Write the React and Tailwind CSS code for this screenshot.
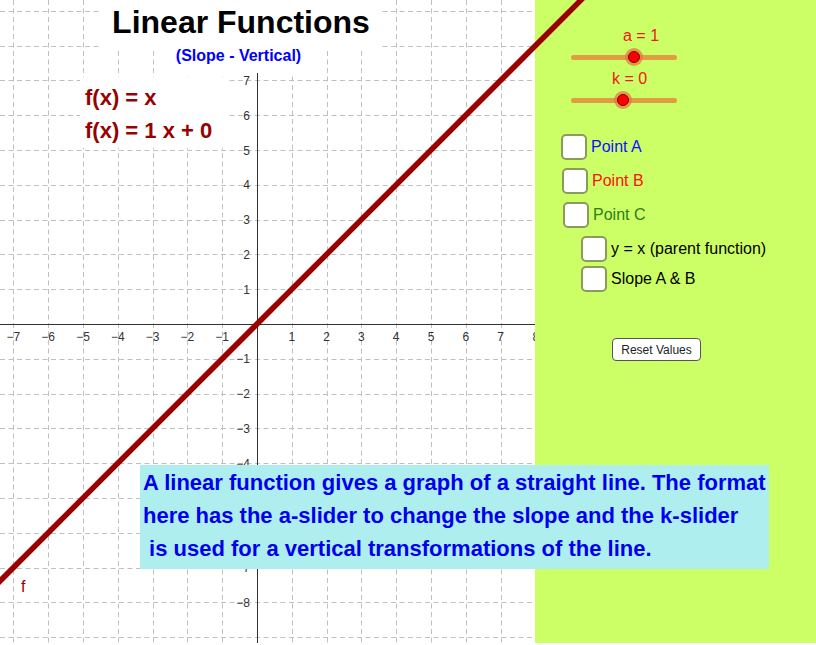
import React from 'react';

const UNIT = 34.8;
const OX = 257;
const OY = 324;
const W = 535;
const H = 643;

const px = (k) => Math.round(OX + UNIT * k) + 0.5;
const py = (k) => Math.round(OY - UNIT * k) + 0.5;
const range = (a, b) => Array.from({ length: b - a + 1 }, (_, i) => a + i);
const fmt = (n) => (n < 0 ? `\u2212${-n}` : `${n}`);

// y ticks hidden behind the text boxes are left out
const Y_TICKS = [-8, -7, -4, -3, -2, -1, 1, 2, 3, 4, 5, 6, 7];

function Graph() {
  return (
    <svg width={W} height={H} className="block">
      {/* grid */}
      {range(-7, 8).map((k) => (
        <line key={`gx${k}`} x1={px(k)} y1={0} x2={px(k)} y2={H} stroke="#c0c0c0" strokeDasharray="5 3.5" />
      ))}
      {range(-9, 9).map((k) => (
        <line key={`gy${k}`} x1={0} y1={py(k)} x2={W} y2={py(k)} stroke="#c0c0c0" strokeDasharray="5 3.5" />
      ))}

      {/* axes */}
      <line x1={0} y1={OY + 0.5} x2={W} y2={OY + 0.5} stroke="#333" />
      <line x1={OX + 0.5} y1={73} x2={OX + 0.5} y2={H} stroke="#333" />

      {/* tick labels */}
      <g fontFamily="'Liberation Sans', Arial, sans-serif" fontSize="12" fill="#333">
        {range(-7, 7).filter((k) => k !== 0).map((k) => (
          <text key={`lx${k}`} x={OX + UNIT * k} y={341} textAnchor="middle">{fmt(k)}</text>
        ))}
        <text x={OX + UNIT * 8 - 3} y={341}>8</text>
        {Y_TICKS.map((k) => (
          <text key={`ly${k}`} x={250} y={OY - UNIT * k + 4.5} textAnchor="end">{fmt(k)}</text>
        ))}
      </g>
    </svg>
  );
}

function Slider({ label, labelOffset, knob }) {
  return (
    <>
      <div className="h-[18px] leading-[18px] text-[16px] text-[#f01818]" style={{ marginLeft: labelOffset }}>
        {label}
      </div>
      <div className="relative ml-[36px] mt-[3px] h-[18px] w-[106px]">
        <div className="absolute left-0 right-0 top-[6.5px] h-[5px] rounded-full bg-[#e29d44]" />
        <div
          className="absolute top-0 h-[18px] w-[18px] rounded-full bg-[#e8703f]/70 flex items-center justify-center"
          style={{ left: knob - 9 }}
        >
          <div className="h-[12px] w-[12px] rounded-full bg-[#ff0000] border border-[#7a0000]" />
        </div>
      </div>
    </>
  );
}

function Check({ label, color, className }) {
  return (
    <div className={`flex items-center gap-[4px] ${className}`}>
      <div className="h-[26px] w-[26px] rounded-[5px] border-2 border-[#8c9b5c] bg-white" />
      <span className="text-[16px] leading-[18px]" style={{ color }}>{label}</span>
    </div>
  );
}

export default function App() {
  return (
    <div className="relative flex w-[816px] h-[643px] overflow-hidden font-['Liberation_Sans',Arial,sans-serif]">
      {/* graphics view */}
      <div className="relative w-[535px] h-[643px] bg-white shrink-0">
        <Graph />

        <div className="absolute left-[100px] top-0 w-[282px] h-[48px] bg-white pt-[6px] text-center text-[32px] leading-[32px] font-bold text-black">
          Linear Functions
        </div>
        <div className="absolute left-[170px] top-[44px] w-[137px] h-[29px] bg-white pt-[4px] text-center text-[16px] leading-[16px] font-bold text-[#0000ff]">
          (Slope - Vertical)
        </div>
        <div className="absolute left-[80px] top-[77px] w-[146px] h-[71px] bg-white pt-[4px] pl-[5px] text-[22px] leading-[33px] font-bold text-[#990000]">
          <div>f(x) = x</div>
          <div>f(x) = 1 x + 0</div>
        </div>
        <div className="absolute left-[21px] top-[577px] text-[16px] leading-[20px] text-[#990000]">f</div>
      </div>

      {/* controls */}
      <div className="flex-1 bg-[#ccff66] flex flex-col pt-[27px]">
        <Slider label="a = 1" labelOffset={88} knob={63} />
        <div className="mt-[4px]" />
        <Slider label="k = 0" labelOffset={77} knob={52} />

        <Check label="Point A" color="#1010ff" className="mt-[25px] ml-[26px]" />
        <Check label="Point B" color="#ff1010" className="mt-[8px] ml-[27px]" />
        <Check label="Point C" color="#2e7d14" className="mt-[8px] ml-[28px]" />
        <Check label="y = x (parent function)" color="#000" className="mt-[8px] ml-[46px]" />
        <Check label="Slope A & B" color="#000" className="mt-[4px] ml-[46px]" />

        <button className="mt-[46px] ml-[77px] w-[89px] h-[23px] rounded-[4px] border border-[#555] bg-white text-[12px] text-[#222]">
          Reset Values
        </button>
      </div>

      {/* the function f drawn over both views */}
      <svg width={816} height={643} className="absolute left-0 top-0 pointer-events-none">
        <line x1={-20} y1={OY + OX + 20} x2={OX + OY + 20} y2={-20} stroke="#990000" strokeWidth="5.5" />
      </svg>

      <div className="absolute left-[140px] top-[465px] w-[629px] h-[104px] bg-[#afeeee] pl-[3px] pt-[1px] text-[22px] leading-[33px] font-bold text-[#0000ee] whitespace-pre">
        <div>A linear function gives a graph of a straight line. The format</div>
        <div>here has the a-slider to change the slope and the k-slider</div>
        <div> is used for a vertical transformations of the line.</div>
      </div>
    </div>
  );
}
